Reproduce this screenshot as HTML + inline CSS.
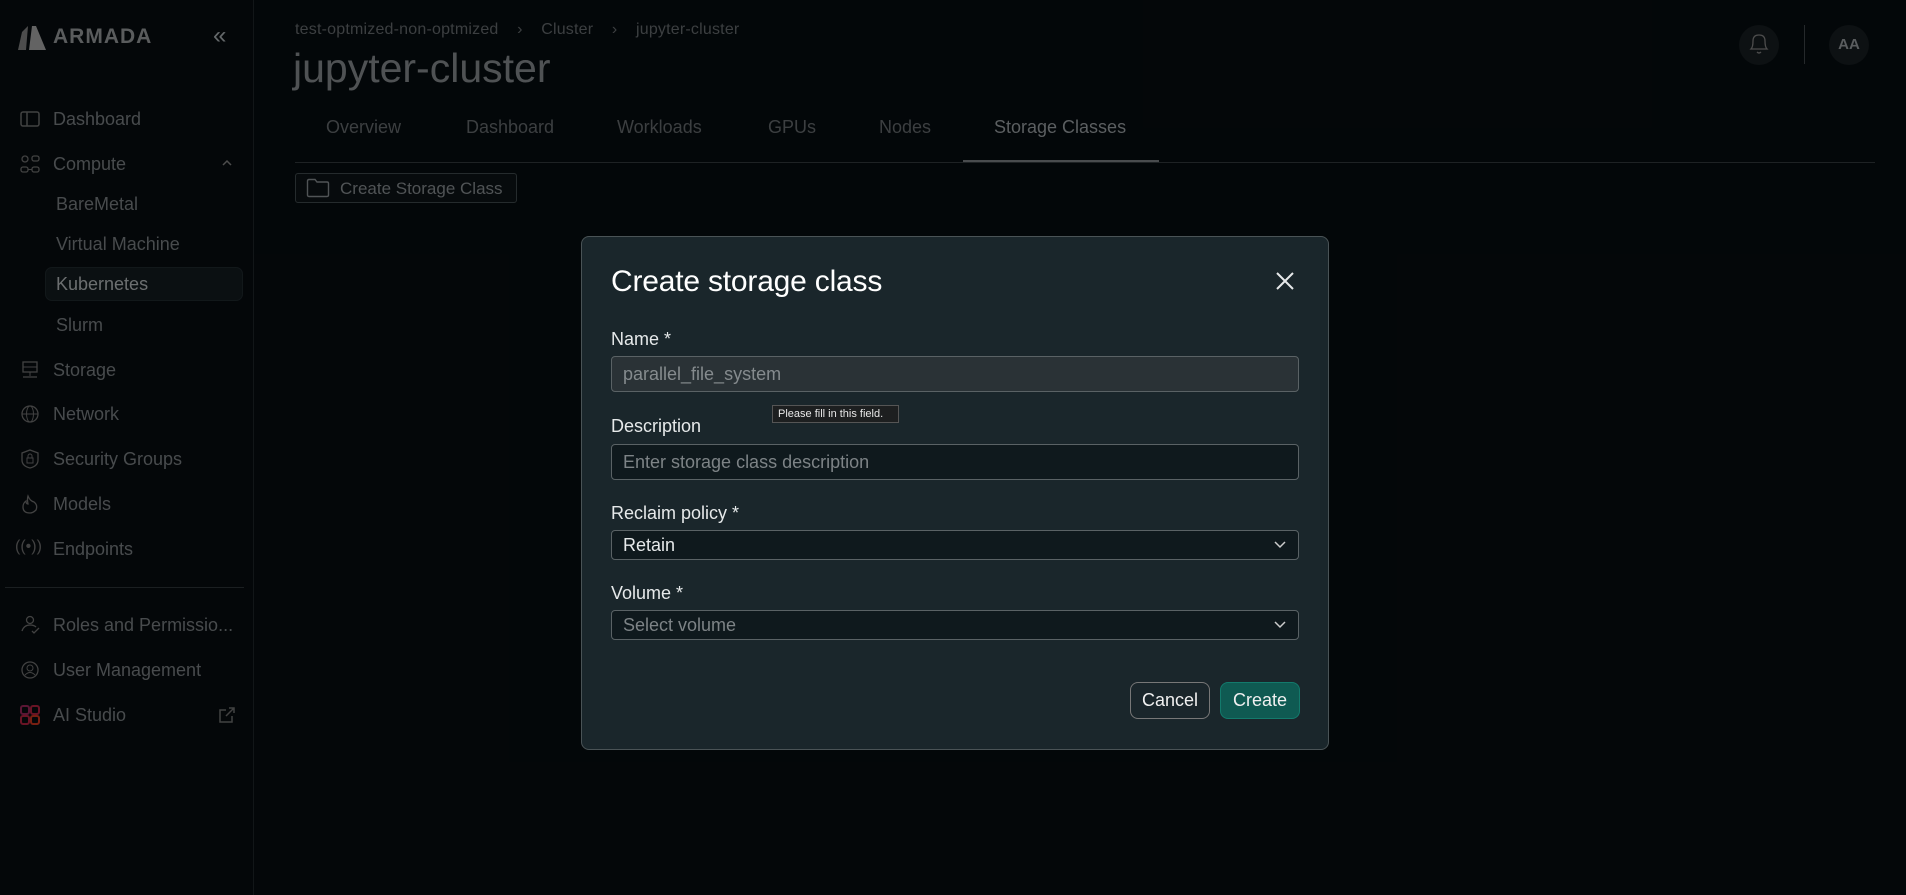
<!DOCTYPE html>
<html><head><meta charset="utf-8"><style>
*{box-sizing:border-box;margin:0;padding:0}
body{width:1906px;height:895px;background:#060b0e;font-family:"Liberation Sans",sans-serif;overflow:hidden;position:relative;color:#8a8f92}
.sb{position:absolute;left:0;top:0;width:254px;height:895px;background:#070c0f;border-right:1px solid #1c2326}
.abs{position:absolute}
.nav{position:absolute;left:53px;font-size:18px;color:#6f7477;line-height:22px}
.sub{left:56px}
.ic{position:absolute;left:19px;width:22px;height:22px}
.tab{position:absolute;top:117px;font-size:18px;color:#5c6164}
.ov{position:absolute;left:0;top:0;width:1906px;height:895px;background:rgba(0,0,0,0.35)}
.modal{position:absolute;left:581px;top:236px;width:748px;height:514px;background:#1a262b;border:1px solid #4a5356;border-radius:8px}
.lbl{position:absolute;left:29px;font-size:18px;color:#e6e9ea}
.inp{position:absolute;left:29px;width:688px;border:1px solid #5a6265;border-radius:4px;background:#0f191d;font-size:18px;padding-left:11px;display:flex;align-items:center}
</style></head><body>
<div class="sb">
 <svg class="abs" style="left:16px;top:24px" width="34" height="26" viewBox="0 0 34 26"><path d="M2 26 L6 8 L12 2 L10 26 Z" fill="#777"/><path d="M13 26 L16 2 L20 2 L30 26 Z" fill="#999"/></svg>
 <div class="abs" style="left:53px;top:25px;font-size:21px;font-weight:bold;color:#8a8e90;letter-spacing:1px">ARMADA</div>
 <div class="abs" style="left:213px;top:22px;font-size:24px;color:#9aa0a3">«</div>
 <svg class="ic" style="top:108px" viewBox="0 0 22 22"><rect x="2" y="4" width="18" height="14" rx="2" fill="none" stroke="#666" stroke-width="1.5"/><line x1="8" y1="4" x2="8" y2="18" stroke="#666" stroke-width="1.5"/></svg>
 <div class="nav" style="top:108px">Dashboard</div>
 <svg class="ic" style="top:153px" viewBox="0 0 22 22"><circle cx="6" cy="6" r="3" fill="none" stroke="#666" stroke-width="1.3"/><rect x="13" y="3" width="7" height="5" rx="2" fill="none" stroke="#666" stroke-width="1.3"/><rect x="2" y="14" width="7" height="5" rx="2" fill="none" stroke="#666" stroke-width="1.3"/><rect x="13" y="14" width="7" height="5" rx="2" fill="none" stroke="#666" stroke-width="1.3"/><line x1="9" y1="16.5" x2="13" y2="16.5" stroke="#666"/></svg>
 <div class="nav" style="top:153px">Compute</div>
 <svg class="abs" style="left:221px;top:159px" width="12" height="8" viewBox="0 0 12 8"><path d="M2 6 L6 2 L10 6" fill="none" stroke="#777" stroke-width="1.5"/></svg>
 <div class="nav sub" style="top:193px">BareMetal</div>
 <div class="nav sub" style="top:233px">Virtual Machine</div>
 <div class="abs" style="left:45px;top:267px;width:198px;height:34px;background:#121a1d;border:1px solid #1d2529;border-radius:7px"></div>
 <div class="nav sub" style="top:273px;color:#a6abad">Kubernetes</div>
 <div class="nav sub" style="top:314px">Slurm</div>
 <svg class="ic" style="top:359px" viewBox="0 0 22 22"><rect x="4" y="3" width="14" height="10" fill="none" stroke="#666" stroke-width="1.3"/><line x1="4" y1="8" x2="18" y2="8" stroke="#666"/><line x1="11" y1="13" x2="11" y2="17" stroke="#666"/><line x1="4" y1="18" x2="18" y2="18" stroke="#666" stroke-width="1.3"/></svg>
 <div class="nav" style="top:359px">Storage</div>
 <svg class="ic" style="top:403px" viewBox="0 0 22 22"><circle cx="11" cy="11" r="8" fill="none" stroke="#666" stroke-width="1.3"/><ellipse cx="11" cy="11" rx="3.5" ry="8" fill="none" stroke="#666"/><line x1="3" y1="11" x2="19" y2="11" stroke="#666"/></svg>
 <div class="nav" style="top:403px">Network</div>
 <svg class="ic" style="top:448px" viewBox="0 0 22 22"><path d="M11 2 L19 5 L19 12 Q19 18 11 20 Q3 18 3 12 L3 5 Z" fill="none" stroke="#666" stroke-width="1.3"/><rect x="8" y="10" width="6" height="5" fill="none" stroke="#666"/><path d="M9 10 V8 a2 2 0 0 1 4 0 V10" fill="none" stroke="#666"/></svg>
 <div class="nav" style="top:448px">Security Groups</div>
 <svg class="ic" style="top:493px" viewBox="0 0 22 22"><path d="M9 3 Q11 8 15 9 Q19 12 17 17 Q14 20 11 20 Q4 20 4 14 Q4 10 7 8 Q7 11 9 11 Q8 6 9 3Z" fill="none" stroke="#666" stroke-width="1.3"/></svg>
 <div class="nav" style="top:493px">Models</div>
 <div class="abs" style="left:15px;top:538px;font-size:16px;color:#666">((•))</div>
 <div class="nav" style="top:538px">Endpoints</div>
 <div class="abs" style="left:5px;top:587px;width:239px;height:1px;background:#2a3134"></div>
 <svg class="ic" style="top:614px" viewBox="0 0 22 22"><circle cx="11" cy="6" r="3.5" fill="none" stroke="#666" stroke-width="1.3"/><path d="M3 17 Q5 11 11 11 Q15 11 17 13" fill="none" stroke="#666" stroke-width="1.3"/><path d="M13 17 L15 19 L20 14" fill="none" stroke="#666" stroke-width="1.3"/></svg>
 <div class="nav" style="top:614px">Roles and Permissio...</div>
 <svg class="ic" style="top:659px" viewBox="0 0 22 22"><circle cx="11" cy="11" r="8" fill="none" stroke="#666" stroke-width="1.3"/><circle cx="11" cy="9" r="3" fill="none" stroke="#666"/><path d="M6 16 Q11 11 16 16" fill="none" stroke="#666"/></svg>
 <div class="nav" style="top:659px">User Management</div>
 <svg class="ic" style="top:704px" viewBox="0 0 22 22"><rect x="2" y="2" width="8" height="8" rx="2" fill="none" stroke="#8a2350" stroke-width="2"/><rect x="12" y="2" width="8" height="8" rx="2" fill="none" stroke="#a2203a" stroke-width="2"/><rect x="2" y="12" width="8" height="8" rx="2" fill="none" stroke="#a2203a" stroke-width="2"/><rect x="12" y="12" width="8" height="8" rx="2" fill="none" stroke="#b8301d" stroke-width="2"/></svg>
 <div class="nav" style="top:704px">AI Studio</div>
 <svg class="abs" style="left:217px;top:705px" width="20" height="20" viewBox="0 0 20 20"><path d="M15 11 V17 H3 V5 H9 M12 3 H17 V8 M17 3 L9 11" fill="none" stroke="#666" stroke-width="1.5"/></svg>
</div>

<div class="abs" style="left:295px;top:21px;font-size:16px;color:#5d6265;letter-spacing:0.2px">test-optmized-non-optmized&nbsp;&nbsp;&nbsp;&nbsp;›&nbsp;&nbsp;&nbsp;&nbsp;Cluster&nbsp;&nbsp;&nbsp;&nbsp;›&nbsp;&nbsp;&nbsp;&nbsp;jupyter-cluster</div>
<div class="abs" style="left:293px;top:45px;font-size:41px;color:#7a7f82">jupyter-cluster</div>
<div class="tab" style="left:326px">Overview</div>
<div class="tab" style="left:466px">Dashboard</div>
<div class="tab" style="left:617px">Workloads</div>
<div class="tab" style="left:768px">GPUs</div>
<div class="tab" style="left:879px">Nodes</div>
<div class="tab" style="left:994px;color:#8d9295">Storage Classes</div>
<div class="abs" style="left:295px;top:162px;width:1580px;height:1px;background:#2e3538"></div>
<div class="abs" style="left:963px;top:160px;width:196px;height:2px;background:#707578"></div>
<div class="abs" style="left:295px;top:173px;width:222px;height:30px;border:1px solid #3a4245;border-radius:3px;background:#0b1114;font-size:17px;color:#7c8184;padding:5px 0 0 44px">Create Storage Class</div>
<svg class="abs" style="left:306px;top:178px" width="24" height="20" viewBox="0 0 24 20"><path d="M1.5 3 Q1.5 1.5 3 1.5 H9 L11 4 H21 Q22.5 4 22.5 5.5 V17 Q22.5 18.5 21 18.5 H3 Q1.5 18.5 1.5 17 Z" fill="none" stroke="#7c8184" stroke-width="1.4"/></svg>
<div class="abs" style="left:1739px;top:25px;width:40px;height:40px;border-radius:50%;background:#151b1e"></div>
<svg class="abs" style="left:1747px;top:31px" width="24" height="26" viewBox="0 0 24 26"><path d="M4 18 Q6 16 6 10 Q6 4 12 4 Q18 4 18 10 Q18 16 20 18 Z" fill="none" stroke="#777" stroke-width="1.3"/><path d="M10 21 Q12 23 14 21" fill="none" stroke="#777" stroke-width="1.3"/></svg>
<div class="abs" style="left:1804px;top:25px;width:1px;height:39px;background:#3a4043"></div>
<div class="abs" style="left:1829px;top:25px;width:40px;height:40px;border-radius:50%;background:#151b1e;font-size:15px;font-weight:bold;color:#8a8f92;text-align:center;line-height:40px">AA</div>

<div class="ov"></div>
<div class="modal">
 <div class="abs" style="left:29px;top:28px;font-size:30px;color:#fff;letter-spacing:-0.2px">Create storage class</div>
 <svg class="abs" style="left:692px;top:33px" width="22" height="22" viewBox="0 0 22 22"><path d="M3 3 L19 19 M19 3 L3 19" stroke="#e6e9ea" stroke-width="2"/></svg>
 <div class="lbl" style="top:92px">Name *</div>
 <div class="inp" style="top:119px;height:36px;background:#2a3236;color:#858b8e">parallel_file_system</div>
 <div class="abs" style="left:190px;top:168px;width:127px;height:18px;background:#1d1f20;border:1px solid #555;font-size:11px;color:#e8e8e8;padding:2px 0 0 5px">Please fill in this field.</div>
 <div class="lbl" style="top:179px">Description</div>
 <div class="inp" style="top:207px;height:36px;color:#7d8386">Enter storage class description</div>
 <div class="lbl" style="top:266px">Reclaim policy *</div>
 <div class="inp" style="top:293px;height:30px;color:#e6e9ea">Retain</div>
 <div class="lbl" style="top:346px">Volume *</div>
 <div class="inp" style="top:373px;height:30px;color:#7d8386">Select volume</div>
 <svg class="abs" style="left:691px;top:303px" width="14" height="10" viewBox="0 0 14 10"><path d="M2 2 L7 7 L12 2" fill="none" stroke="#ccc" stroke-width="1.5"/></svg>
 <svg class="abs" style="left:691px;top:383px" width="14" height="10" viewBox="0 0 14 10"><path d="M2 2 L7 7 L12 2" fill="none" stroke="#ccc" stroke-width="1.5"/></svg>
 <div class="abs" style="left:548px;top:445px;width:80px;height:37px;border:1px solid #777;border-radius:8px;font-size:18px;color:#f0f0f0;text-align:center;line-height:35px">Cancel</div>
 <div class="abs" style="left:638px;top:445px;width:80px;height:37px;border:1px solid #137a6c;background:#0f5a52;border-radius:8px;font-size:18px;color:#f0f0f0;text-align:center;line-height:35px">Create</div>
</div>
</body></html>
